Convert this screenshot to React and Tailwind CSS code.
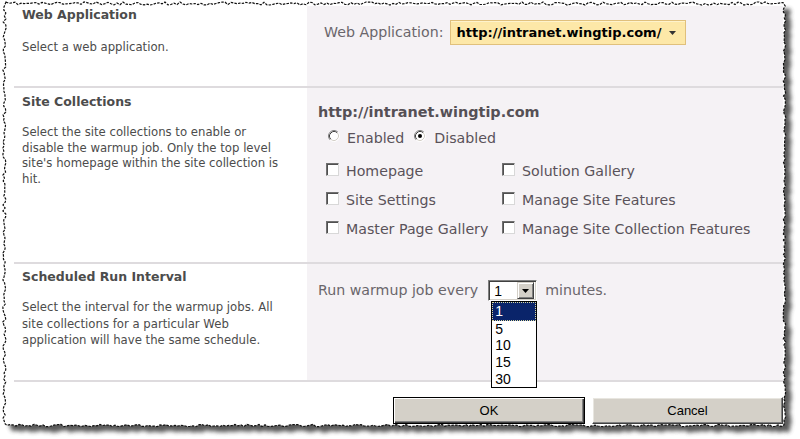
import React from 'react';

function rng(seed) {
  let s = seed;
  return () => {
    s = (s * 16807) % 2147483647;
    return (s - 1) / 2147483646;
  };
}

function edgePath(seed, dx = 0, dy = 0) {
  const r = rng(seed);
  const pts = [];
  for (let x = 6; x <= 784; x += 3) pts.push([x, 3.5 + (r() - 0.5) * 3]);
  for (let y = 6; y <= 424; y += 3) pts.push([784.5 + (r() - 0.5) * 2.5, y]);
  for (let x = 784; x >= 6; x -= 3) pts.push([x, 425.5 + (r() - 0.5) * 2.5]);
  for (let y = 424; y >= 6; y -= 3) pts.push([4.5 + (r() - 0.5) * 3.5, y]);
  return 'M' + pts.map((p) => (p[0] + dx).toFixed(1) + ',' + (p[1] + dy).toFixed(1)).join('L') + 'Z';
}

function Radio({ checked }) {
  return (
    <svg width="12" height="12" viewBox="0 0 12 12" className="mb-[6px] shrink-0">
      <circle cx="6" cy="6" r="5" fill="#fff" />
      <path d="M9.89 2.11 A5.5 5.5 0 0 0 2.11 9.89" fill="none" stroke="#808080" strokeWidth="1" />
      <path d="M9.18 2.82 A4.5 4.5 0 0 0 2.82 9.18" fill="none" stroke="#404040" strokeWidth="1" />
      <path d="M9.89 2.11 A5.5 5.5 0 0 1 2.11 9.89" fill="none" stroke="#ffffff" strokeWidth="1" />
      <path d="M9.18 2.82 A4.5 4.5 0 0 1 2.82 9.18" fill="none" stroke="#d4d0c8" strokeWidth="1" />
      {checked && <circle cx="6" cy="6" r="2" fill="#000" />}
    </svg>
  );
}

function Check({ label }) {
  return (
    <div className="flex items-center h-[29px]">
      <div className="w-[13px] h-[13px] mb-[5px] shrink-0 bg-white border border-t-[#707070] border-l-[#707070] border-r-[#d8d8d8] border-b-[#d8d8d8] shadow-[inset_1px_1px_0_#505050]" />
      <span className="ml-[7px] text-[#5a525a]">{label}</span>
    </div>
  );
}

function Section({ left, right, rightClass, leftClass }) {
  return (
    <div className="flex border-b-2 border-[#dedbde]">
      <div className={'w-[293px] shrink-0 pl-[8px] bg-white ' + leftClass}>{left}</div>
      <div className={'flex-1 bg-[#f5f2f5] ' + rightClass}>{right}</div>
    </div>
  );
}

export default function App() {
  const mainEdge = edgePath(11);
  const shadowEdge = edgePath(11, 6, 6);
  return (
    <div className="relative w-[800px] h-[439px] bg-white overflow-hidden font-['DejaVu_Sans',sans-serif]">
      <svg className="absolute inset-0 pointer-events-none" width="800" height="439">
        <defs>
          <filter id="blur" x="-5%" y="-5%" width="110%" height="110%">
            <feGaussianBlur stdDeviation="2" />
          </filter>
        </defs>
        <path d={shadowEdge} fill="#3c3c3c" opacity="0.85" filter="url(#blur)" />
        <path d={mainEdge} fill="#ffffff" />
      </svg>

      <div className="relative pt-[6px] pl-[14px] pr-[17px]">
        <Section
          leftClass="h-[80px] pt-[1px]"
          rightClass="pt-[14px] pl-[17px]"
          left={
            <div className="text-[#4c4c4c]">
              <div className="text-[12.5px] font-bold leading-[16px]">Web Application</div>
              <div className="mt-[16px] text-[11.7px] leading-[16px]">Select a web application.</div>
            </div>
          }
          right={
            <div className="flex items-center">
              <span className="text-[14.2px] text-[#6a666b]">Web Application:</span>
              <div className="ml-[6px] w-[236px] h-[25px] flex items-center pl-[6px] bg-[#fde8a8] border border-[#e0c07c] shadow-[inset_0_1px_0_#fff3cc]">
                <span className="text-[13px] font-bold text-black leading-none">http://intranet.wingtip.com/</span>
                <svg width="7" height="4" viewBox="0 0 7 4" className="ml-[8px] mt-[1px]">
                  <path d="M0 0 L7 0 L3.5 4 Z" fill="#333" />
                </svg>
              </div>
            </div>
          }
        />

        <Section
          leftClass="h-[174px] pt-[6px]"
          rightClass="pt-[15px] pl-[11px]"
          left={
            <div className="text-[#4c4c4c]">
              <div className="text-[12.5px] font-bold leading-[16px]">Site Collections</div>
              <div className="mt-[15px] text-[11.7px] leading-[15.5px]">
                Select the site collections to enable or
                <br />
                disable the warmup job. Only the top level
                <br />
                site's homepage within the site collection is
                <br />
                hit.
              </div>
            </div>
          }
          right={
            <div className="text-[14.2px]">
              <div className="h-[18px] leading-[18px] font-bold text-[14.4px] text-[#555055]">http://intranet.wingtip.com</div>
              <div className="mt-[9px] h-[18px] flex items-center text-[#5a525a]">
                <div className="ml-[10px]">
                  <Radio />
                </div>
                <span className="ml-[7px]">Enabled</span>
                <div className="ml-[10px]">
                  <Radio checked />
                </div>
                <span className="ml-[8px]">Disabled</span>
              </div>
              <div className="mt-[9px] ml-[8px] grid grid-cols-[176px_auto]">
                <Check label="Homepage" />
                <Check label="Solution Gallery" />
                <Check label="Site Settings" />
                <Check label="Manage Site Features" />
                <Check label="Master Page Gallery" />
                <Check label="Manage Site Collection Features" />
              </div>
            </div>
          }
        />

        <Section
          leftClass="h-[116px] pt-[5px]"
          rightClass="pt-[16px] pl-[11px]"
          left={
            <div className="text-[#4c4c4c]">
              <div className="text-[12.5px] font-bold leading-[16px]">Scheduled Run Interval</div>
              <div className="mt-[14px] text-[11.7px] leading-[16.5px]">
                Select the interval for the warmup jobs. All
                <br />
                site collections for a particular Web
                <br />
                application will have the same schedule.
              </div>
            </div>
          }
          right={
            <div className="flex items-center text-[14.2px] text-[#6a666b]">
              <span>Run warmup job every</span>
              <div className="relative ml-[10px]">
                <div className="w-[49px] h-[21px] flex items-center bg-white border border-t-[#808080] border-l-[#808080] border-r-[#fff] border-b-[#fff] shadow-[inset_1px_1px_0_#404040,inset_-1px_-1px_0_#d4d0c8]">
                  <span className="flex-1 pl-[5px] text-[14px] text-black font-['Liberation_Sans',Arial,sans-serif] leading-none">1</span>
                  <div className="w-[17px] h-[17px] mr-[2px] flex items-center justify-center bg-[#d4d0c8] border border-t-[#d4d0c8] border-l-[#d4d0c8] border-r-[#404040] border-b-[#404040] shadow-[inset_1px_1px_0_#fff,inset_-1px_-1px_0_#808080]">
                    <svg width="7" height="4" viewBox="0 0 7 4">
                      <path d="M0 0 L7 0 L3.5 4 Z" fill="#000" />
                    </svg>
                  </div>
                </div>
                <div className="absolute left-[3px] top-[21px] w-[46px] bg-white border border-black font-['Liberation_Sans',Arial,sans-serif] text-[14px] text-black leading-[16.6px] z-10">
                  <div className="bg-[#0a246a] text-white pl-[2px] border border-dotted border-[#d8d8a0]">1</div>
                  <div className="pl-[3px]">5</div>
                  <div className="pl-[3px]">10</div>
                  <div className="pl-[3px]">15</div>
                  <div className="pl-[3px]">30</div>
                </div>
              </div>
              <span className="ml-[8px]">minutes.</span>
            </div>
          }
        />

        <div className="flex justify-end gap-[7px] pt-[15px] font-['Liberation_Sans',Arial,sans-serif] text-[13px] text-black">
          <div className="w-[192px] h-[27px] border border-black">
            <div className="w-full h-full flex items-center justify-center bg-[#d4d0c8] shadow-[inset_1px_1px_0_#fff,inset_-1px_-1px_0_#404040,inset_-2px_-2px_0_#808080]">
              OK
            </div>
          </div>
          <div className="w-[191px] h-[27px] flex items-center justify-center bg-[#d4d0c8] border border-t-[#fff] border-l-[#fff] border-r-[#404040] border-b-[#404040] shadow-[inset_-1px_-1px_0_#808080,inset_1px_1px_0_#e8e6e0]">
            Cancel
          </div>
        </div>
      </div>

      <svg className="absolute inset-0 pointer-events-none" width="800" height="439">
        <path d={mainEdge} fill="none" stroke="#111" strokeWidth="1.2" strokeDasharray="2.5 1.2" />
      </svg>
    </div>
  );
}
